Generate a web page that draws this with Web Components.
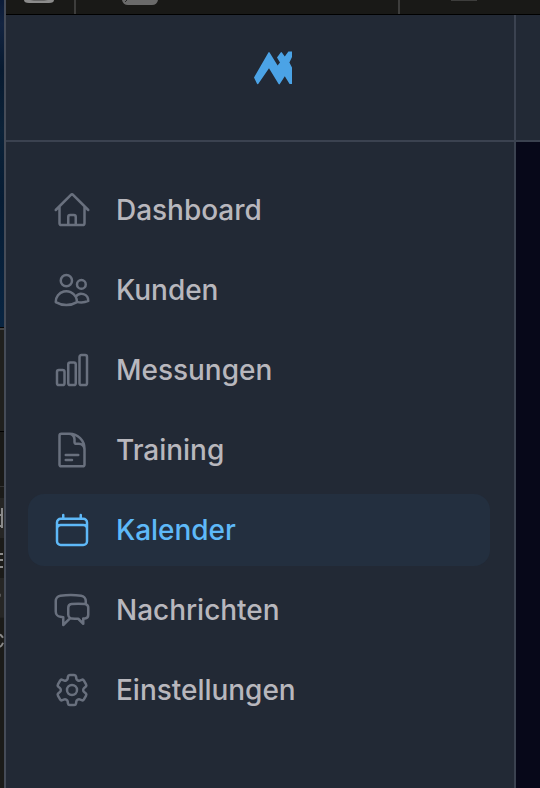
<!DOCTYPE html>
<html lang="de"><head><meta charset="utf-8"><title>Kalender</title>
<style>html,body{margin:0;height:100%;overflow:hidden;background:#232935}body{font-family:Inter,"Liberation Sans",sans-serif}</style></head>
<body>
<app-window>
<nav-item icon="home">Dashboard</nav-item>
<nav-item icon="users">Kunden</nav-item>
<nav-item icon="bars">Messungen</nav-item>
<nav-item icon="doc">Training</nav-item>
<nav-item icon="calendar" active>Kalender</nav-item>
<nav-item icon="chat">Nachrichten</nav-item>
<nav-item icon="cog">Einstellungen</nav-item>
</app-window>
<script>
const icons={
home:'M2.25 12l8.954-8.955c.44-.439 1.152-.439 1.591 0L21.75 12M4.5 9.75v10.125c0 .621.504 1.125 1.125 1.125H9.75v-4.875c0-.621.504-1.125 1.125-1.125h2.25c.621 0 1.125.504 1.125 1.125V21h4.125c.621 0 1.125-.504 1.125-1.125V9.75M8.25 21h8.25',
users:'M15 19.128a9.38 9.38 0 002.625.372 9.337 9.337 0 004.121-.952 4.125 4.125 0 00-7.533-2.493M15 19.128v-.003c0-1.113-.285-2.16-.786-3.07M15 19.128v.106A12.318 12.318 0 018.624 21c-2.331 0-4.512-.645-6.374-1.766l-.001-.109a6.375 6.375 0 0111.964-3.07M12 6.375a3.375 3.375 0 11-6.75 0 3.375 3.375 0 016.75 0zm8.25 2.25a2.625 2.625 0 11-5.25 0 2.625 2.625 0 015.25 0z',
bars:'M3 13.125C3 12.504 3.504 12 4.125 12h2.25c.621 0 1.125.504 1.125 1.125v6.75C7.5 20.496 6.996 21 6.375 21h-2.25A1.125 1.125 0 013 19.875v-6.75zM9.75 8.625c0-.621.504-1.125 1.125-1.125h2.25c.621 0 1.125.504 1.125 1.125v11.25c0 .621-.504 1.125-1.125 1.125h-2.25a1.125 1.125 0 01-1.125-1.125V8.625zM16.5 4.125c0-.621.504-1.125 1.125-1.125h2.25C20.496 3 21 3.504 21 4.125v15.75c0 .621-.504 1.125-1.125 1.125h-2.25a1.125 1.125 0 01-1.125-1.125V4.125z',
doc:'M19.5 14.25v-2.625a3.375 3.375 0 00-3.375-3.375h-1.5A1.125 1.125 0 0113.5 7.125v-1.5a3.375 3.375 0 00-3.375-3.375H8.25m0 12.75h7.5m-7.5 3H12M10.5 2.25H5.625c-.621 0-1.125.504-1.125 1.125v17.25c0 .621.504 1.125 1.125 1.125h12.75c.621 0 1.125-.504 1.125-1.125V11.25a9 9 0 00-9-9z',
calendar:'M6.75 3v2.25M17.25 3v2.25M3 18.75V7.5a2.25 2.25 0 012.25-2.25h13.5A2.25 2.25 0 0121 7.5v11.25m-18 0A2.25 2.25 0 005.25 21h13.5A2.25 2.25 0 0021 18.75m-18 0v-7.5A2.25 2.25 0 015.25 9h13.5A2.25 2.25 0 0121 11.25v7.5',
chat:'M20.25 8.511c.884.284 1.5 1.128 1.5 2.097v4.286c0 1.136-.847 2.1-1.98 2.193-.34.027-.68.052-1.02.072v3.091l-3-3c-1.354 0-2.694-.055-4.02-.163a2.115 2.115 0 01-.825-.242m9.345-8.334a2.126 2.126 0 00-.476-.095 48.64 48.64 0 00-8.048 0c-1.131.094-1.976 1.057-1.976 2.192v4.286c0 .837.46 1.58 1.155 1.951m9.345-8.334V6.637c0-1.621-1.152-3.026-2.76-3.235A48.455 48.455 0 0011.25 3c-2.115 0-4.198.137-6.24.402-1.608.209-2.76 1.614-2.76 3.235v6.226c0 1.621 1.152 3.026 2.76 3.235.577.075 1.157.14 1.74.194V21l4.155-4.155',
cog:'M9.594 3.94c.09-.542.56-.94 1.11-.94h2.593c.55 0 1.02.398 1.11.94l.213 1.281c.063.374.313.686.645.87.074.04.147.083.22.127.324.196.72.257 1.075.124l1.217-.456a1.125 1.125 0 011.37.49l1.296 2.247a1.125 1.125 0 01-.26 1.431l-1.003.827c-.293.24-.438.613-.431.992a6.759 6.759 0 010 .255c-.007.378.138.75.43.99l1.005.828c.424.35.534.954.26 1.43l-1.298 2.247a1.125 1.125 0 01-1.369.491l-1.217-.456c-.355-.133-.75-.072-1.076.124a6.57 6.57 0 01-.22.128c-.331.183-.581.495-.644.869l-.213 1.28c-.09.543-.56.941-1.11.941h-2.594c-.55 0-1.02-.398-1.11-.94l-.213-1.281c-.062-.374-.312-.686-.644-.87a6.52 6.52 0 01-.22-.127c-.325-.196-.72-.257-1.076-.124l-1.217.456a1.125 1.125 0 01-1.369-.49l-1.297-2.247a1.125 1.125 0 01.26-1.431l1.004-.827c.292-.24.437-.613.43-.992a6.932 6.932 0 010-.255c.007-.378-.138-.75-.43-.99l-1.004-.828a1.125 1.125 0 01-.26-1.43l1.297-2.247a1.125 1.125 0 011.37-.491l1.216.456c.356.133.751.072 1.076-.124.072-.044.146-.087.22-.128.332-.183.582-.495.644-.869l.214-1.281zM15 12a3 3 0 11-6 0 3 3 0 016 0z'};
class NavItem extends HTMLElement{
 constructor(){super();this.attachShadow({mode:'open'})}
 connectedCallback(){this.shadowRoot.innerHTML=`<style>
:host{display:flex;align-items:center;gap:24px;height:72px;box-sizing:border-box;padding:0 24px;border-radius:16px;color:#b8b7bd;font-size:28px;font-weight:500;line-height:40px;letter-spacing:-.03px}
:host([active]){background:#232f3f;color:#5eb9f8}
svg{width:40px;height:40px;flex:none;fill:none;stroke:#69707e;stroke-width:1.5;stroke-linecap:round;stroke-linejoin:round}
:host([active]) svg{stroke:#5eb9f8}</style>
<svg viewBox="0 0 24 24"><path d="${icons[this.getAttribute('icon')]}"/></svg><span><slot></slot></span>`}
}
class BrandLogo extends HTMLElement{
 constructor(){super();this.attachShadow({mode:'open'}).innerHTML=`<style>:host{display:block;width:40px;height:34px}svg{display:block}</style>
<svg width="40" height="34" viewBox="0 0 40 34"><path fill="#4ba3e6" d="M1 26.4L15.4 1.4Q16 .5 16.6 1.4L24.6 14.6L27 11.4L24 6.6L27.7 1.4Q28.3 .6 28.9 1.4L31.8 5.4L35.4 .4H39V6L36.4 11.6L39 16.6V33H36.6L31.8 25.2L26.8 33Q26.2 33.8 25.6 33L16 17.2L5.2 33Q4.6 33.6 4 32.8Z"/></svg>`}
}
class EdgeStrip extends HTMLElement{
 constructor(){super();this.attachShadow({mode:'open'}).innerHTML=`<style>
:host{display:flex;flex-direction:column;width:4px;overflow:hidden;background:#1b1b19}
.sky{height:327px;background:linear-gradient(#0b1b37,#132441 24px,#071a30 70px,#0c2238 130px,#061c34 200px,#092542)}
.edge{height:2px;background:#454545;border-top:1px solid #050505}.panel{height:102px;background:#20201e;border-bottom:1px solid #000}
.gap{height:54px;background:#191917;border-bottom:1px solid #333}</style>
<div class="sky"></div><div class="edge"></div><div class="panel"></div><div class="gap"></div>
<svg width="4" height="301" viewBox="0 487 4 301"><path fill="#262625" d="M0 498h4v40H0zM0 578h4v40H0z"/><path fill="none" stroke="#8b8b8b" stroke-width="2" d="M2 508V528M0 515H2M0 526H2M0 554H3M0 560H3M0 567H3M0 635Q1 635 3 638M0 647Q2 646 3 643"/><path fill="#555" d="M0 594h1v3H0z"/></svg>`}
}
class AppWindow extends HTMLElement{
 constructor(){super();this.attachShadow({mode:'open'}).innerHTML=`<style>
:host{display:grid;grid-template-columns:4px 1fr;width:540px;height:788px}
.main{display:grid;grid-template-rows:15px 1fr;min-width:0;border-left:2px solid #454b57}
.top{display:flex;box-sizing:border-box;border-bottom:1px solid #000;background:#191917;overflow:hidden}
.top svg{display:block}
.body{display:grid;grid-template-columns:508px 2px 1fr;background:#222935}
.side{display:grid;grid-template-rows:125px 2px 1fr}
header{display:flex;justify-content:center;box-sizing:border-box;padding:36px 0 0 26px}
.line{background:#3b4250}
nav{display:flex;flex-direction:column;gap:8px;padding:32px 24px 0 22px}
.right{display:grid;grid-template-rows:125px 2px 1fr}.page{background:#070819}</style>
<edge-strip></edge-strip><div class="main"><div class="top"><svg width="534" height="14" viewBox="6 0 534 14"><path d="M24 0H54Q54 3 49 3H29Q24 3 24 0" fill="#8b8b8b"/><path d="M30 0H48L44 1H34Z" fill="#666"/><path d="M122 0H158Q157 5 152 5H128Q123 5 122 0" fill="#6a6a6a"/><path d="M125 2L127 0" stroke="#292929"/><path d="M74 0h2v14h-2zM398 0h2v14h-2zM451 0h26v1h-26z" fill="#3d3d3c"/></svg></div>
<div class="body"><div class="side"><header><brand-logo></brand-logo></header><div class="line"></div><nav><slot></slot></nav></div><div class="line"></div><div class="right"><div></div><div class="line"></div><div class="page"></div></div></div></div>`}
}
customElements.define('nav-item',NavItem);customElements.define('brand-logo',BrandLogo);customElements.define('edge-strip',EdgeStrip);customElements.define('app-window',AppWindow);
</script></body></html>
